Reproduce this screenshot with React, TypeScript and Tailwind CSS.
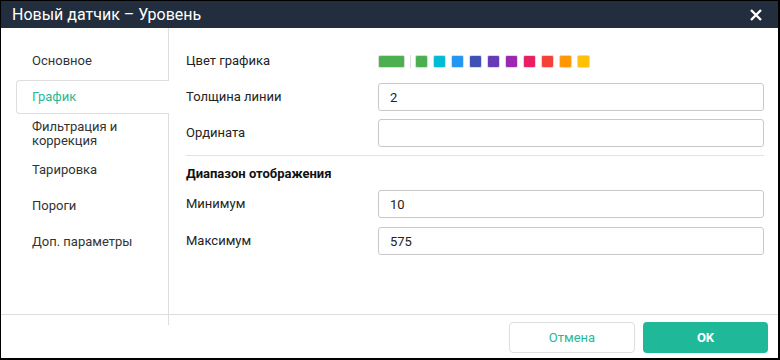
import { useState } from 'react';

const menu = ['Основное', 'График', 'Фильтрация и коррекция', 'Тарировка', 'Пороги', 'Доп. параметры'];

const swatches = [
    'bg-[#4caf50]',
    'bg-[#00bcd4]',
    'bg-[#2196f3]',
    'bg-[#3f51b5]',
    'bg-[#673ab7]',
    'bg-[#9c27b0]',
    'bg-[#e91e63]',
    'bg-[#f44336]',
    'bg-[#ff9800]',
    'bg-[#ffc107]',
];

function Field({ label, value }: { label: string; value: string }) {
    return (
        <div className="flex items-center h-[28px]">
            <span className="w-[192px] shrink-0">{label}</span>
            <input
                defaultValue={value}
                className="w-[386px] h-[28px] border border-[#c8c8c8] rounded-[3px] pl-[11px] outline-none text-[13px] text-[#222]"
            />
        </div>
    );
}

function App() {
    const [active, setActive] = useState(1);

    return (
        <div className="w-[780px] h-[360px] bg-black" style={{ fontFamily: 'Roboto, "Liberation Sans", sans-serif' }}>
            <div className="w-[778px] h-[358px] border-l border-t border-black bg-white flex flex-col text-[13px] text-[#222]">
                {/* Header */}
                <div className="h-[27px] bg-[#222e3d] flex items-center justify-between pl-[11px] pr-[16px] shrink-0">
                    <span className="text-white text-[16px] leading-none">Новый датчик – Уровень</span>
                    <svg width="12" height="12" viewBox="0 0 12 12" className="text-white">
                        <path d="M1 1 11 11M11 1 1 11" stroke="currentColor" strokeWidth="2.4" />
                    </svg>
                </div>

                {/* Body */}
                <div className="flex h-[286px] shrink-0">
                    <div className="w-[168px] shrink-0 border-r border-[#dedede] pt-[16px] pl-[15px] flex flex-col gap-[2px]">
                        {menu.map((item, i) => (
                            <div
                                key={item}
                                onClick={() => setActive(i)}
                                className={
                                    i === active
                                        ? 'h-[34px] flex items-center pl-[15px] pr-2 border border-r-0 border-[#dedede] rounded-l-[4px] bg-white -mr-px relative text-[#26b99a] cursor-pointer'
                                        : i === 2
                                          ? 'h-[35px] flex items-center pl-[16px] pr-2 leading-[14px] text-[#333] cursor-pointer'
                                          : 'h-[34px] flex items-center pl-[16px] pr-2 leading-[14px] text-[#333] cursor-pointer'
                                }
                            >
                                {item}
                            </div>
                        ))}
                    </div>

                    <div className="flex-1 pl-[17px] pr-[14px] pt-[19px]">
                        <div className="flex flex-col gap-[8px]">
                            <div className="flex items-center h-[28px]">
                                <span className="w-[192px] shrink-0">Цвет графика</span>
                                <div className="flex items-center">
                                    <div className="w-[27px] h-[13px] bg-[#4caf50] border border-[#dcdcdc] rounded-[2px]" />
                                    <div className="w-px h-[13px] bg-[#e0e0e0] ml-[5px] mr-[4px]" />
                                    <div className="flex gap-[5px]">
                                        {swatches.map(c => (
                                            <div key={c} className={`w-[13px] h-[13px] border border-[#dcdcdc] rounded-[2px] ${c}`} />
                                        ))}
                                    </div>
                                </div>
                            </div>
                            <Field label="Толщина линии" value="2" />
                            <Field label="Ордината" value="" />
                        </div>

                        <div className="h-px bg-[#e2e2e2] mt-[8px]" />

                        <div className="h-[34px] pt-px flex items-center font-bold text-[#111]">Диапазон отображения</div>

                        <div className="flex flex-col gap-[9px]">
                            <Field label="Минимум" value="10" />
                            <Field label="Максимум" value="575" />
                        </div>
                    </div>
                </div>

                {/* Footer */}
                <div className="flex-1 border-t border-[#dedede] flex">
                    <div className="w-[168px] h-[10px] border-r border-[#dedede] shrink-0" />
                    <div className="ml-auto flex gap-[8px] pt-[7px] pr-[10px]">
                        <button className="w-[126px] h-[31px] border border-[#dedede] rounded-[4px] bg-white text-[#26b99a] text-[13px]">
                            Отмена
                        </button>
                        <button className="w-[125px] h-[31px] rounded-[4px] bg-[#1fb99a] text-white font-bold text-[13px]">
                            OK
                        </button>
                    </div>
                </div>
            </div>
        </div>
    );
}

export default App;
